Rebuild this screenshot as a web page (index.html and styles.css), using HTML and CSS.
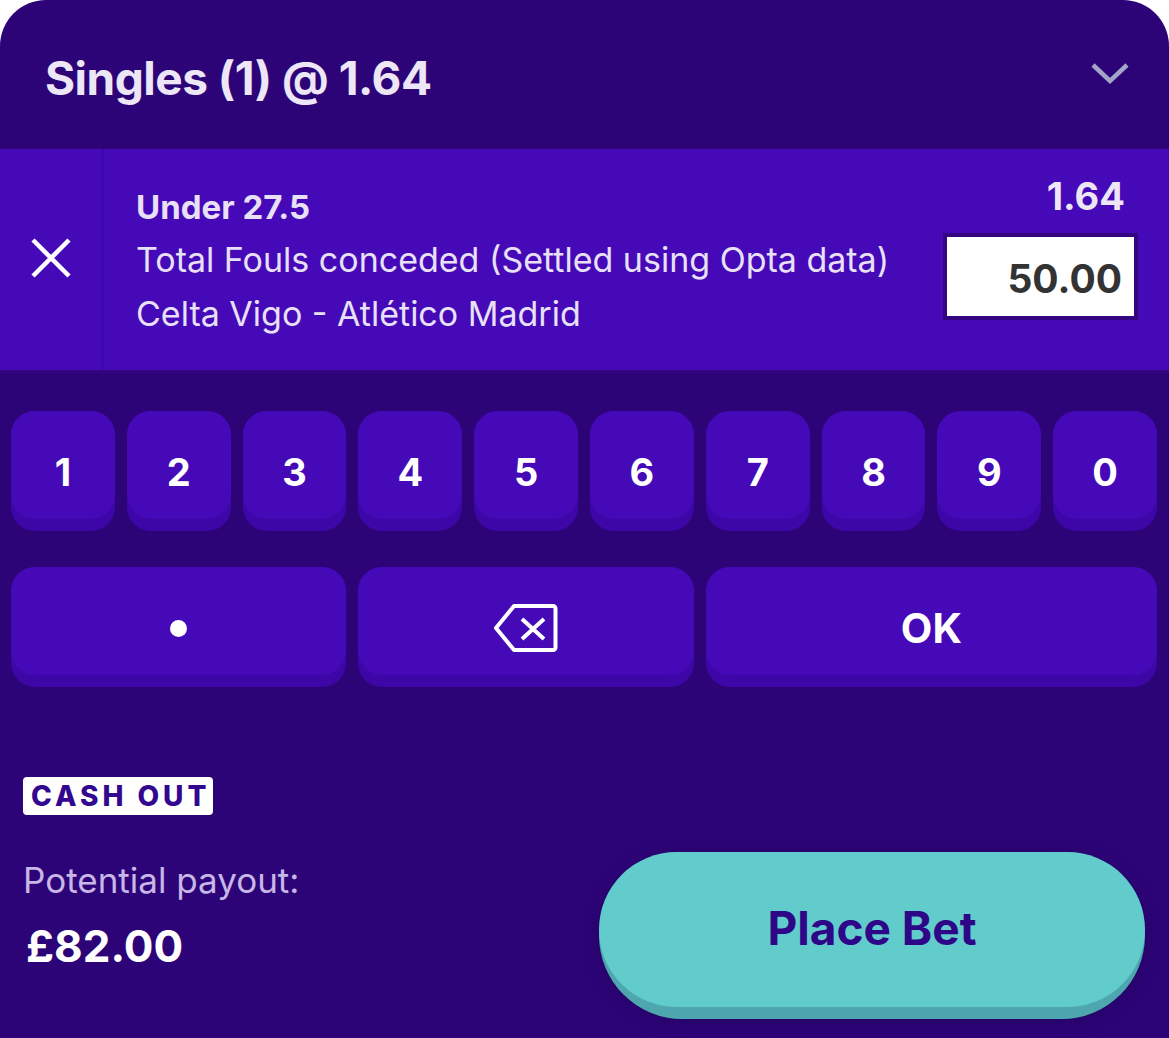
FILE: index.html
```html
<!DOCTYPE html>
<html lang="en">
<head>
  <meta charset="UTF-8">
  <meta name="viewport" content="width=device-width, initial-scale=1.0">
  <title>Bet Slip</title>
  <link rel="stylesheet" href="styles.css">
</head>
<body>
  <div class="betslip">
    <!-- Slip header -->
    <header class="slip-head">
      <h1>Singles (1) @ 1.64</h1>
      <svg class="chevron" width="40" height="24" viewBox="0 0 40 24">
        <path d="M3 4 L20 20 L37 4" fill="none" stroke="#a3a5c6" stroke-width="4.5"/>
      </svg>
    </header>

    <!-- Selection row -->
    <section class="selection">
      <div class="remove">
        <svg width="40" height="40" viewBox="0 0 40 40">
          <path d="M2 2 L38 38 M38 2 L2 38" stroke="#fff" stroke-width="4.5"/>
        </svg>
      </div>
      <div class="sel-info">
        <div class="market">Under 27.5</div>
        <div class="desc">Total Fouls conceded (Settled using Opta data)</div>
        <div class="desc">Celta Vigo - Atlético Madrid</div>
      </div>
      <div class="sel-stake">
        <div class="odds">1.64</div>
        <div class="stake">50.00</div>
      </div>
    </section>

    <!-- Stake keypad -->
    <div class="keypad">
      <div class="key"><span>1</span></div>
      <div class="key"><span>2</span></div>
      <div class="key"><span>3</span></div>
      <div class="key"><span>4</span></div>
      <div class="key"><span>5</span></div>
      <div class="key"><span>6</span></div>
      <div class="key"><span>7</span></div>
      <div class="key"><span>8</span></div>
      <div class="key"><span>9</span></div>
      <div class="key"><span>0</span></div>
      <div class="key wide"><span><i class="dot"></i></span></div>
      <div class="key wide">
        <span>
          <svg width="66" height="50" viewBox="0 0 66 50">
            <path d="M21 3 H60 A2.5 2.5 0 0 1 62.5 5.5 V44.5 A2.5 2.5 0 0 1 60 47 H21 L3 25 Z" fill="none" stroke="#fff" stroke-width="4" stroke-linejoin="round"/>
            <path d="M29 16 L51 36 M51 16 L29 36" stroke="#fff" stroke-width="4"/>
          </svg>
        </span>
      </div>
      <div class="key ok"><span>OK</span></div>
    </div>

    <!-- Payout and place bet -->
    <footer class="slip-foot">
      <div class="payout">
        <div class="badge">CASH OUT</div>
        <div class="payout-label">Potential payout:</div>
        <div class="payout-value">£82.00</div>
      </div>
      <button class="place-bet"><span>Place Bet</span></button>
    </footer>
  </div>
</body>
</html>
```

FILE: styles.css
```css
body {
  margin: 0;
  background-color: #fff;
  font-family: Inter, "Open Sans", sans-serif;
}

.betslip {
  width: 1169px;
  height: 1038px;
  background-color: #2d0478;
  border-radius: 46px 46px 0 0;
  overflow: hidden;
}

.slip-head {
  height: 149px;
  display: flex;
  align-items: center;
  justify-content: space-between;
  padding: 0 39px 0 45px;
  box-sizing: border-box;
}

.slip-head h1 {
  margin: 0;
  color: #ece6f7;
  font-size: 46px;
  font-weight: 700;
  letter-spacing: -0.5px;
  padding-top: 6px;
}

.chevron {
  margin-top: -4px;
}

.selection {
  display: flex;
  height: 221px;
  background-color: #4509b8;
  border-bottom: 3px solid #33067f;
}

.remove {
  width: 104px;
  flex: none;
  display: flex;
  align-items: center;
  justify-content: center;
  border-right: 2px solid #3e08a8;
  padding-bottom: 4px;
  box-sizing: border-box;
}

.sel-info {
  flex: 1;
  padding: 36px 0 0 32px;
  color: #e8e0f6;
}

.market {
  font-size: 33px;
  font-weight: 700;
  line-height: 44px;
  margin-bottom: 4px;
}

.desc {
  font-size: 34px;
  line-height: 54px;
}

.sel-stake {
  display: flex;
  flex-direction: column;
  align-items: flex-end;
  padding: 24px 31px 0 0;
}

.odds {
  color: #ece6f7;
  font-size: 38px;
  font-weight: 700;
  line-height: 46px;
  margin-right: 13px;
}

.stake {
  margin-top: 14px;
  width: 175px;
  height: 79px;
  background-color: #fff;
  border: 4px solid #33067f;
  color: #333;
  font-size: 39px;
  font-weight: 700;
  text-align: right;
  line-height: 84px;
  padding-right: 12px;
  box-sizing: content-box;
}

.keypad {
  display: grid;
  grid-template-columns: repeat(10, 1fr);
  gap: 36px 12px;
  padding: 38px 12px 0 11px;
}

.key {
  background-color: #3c07a6;
  border-radius: 24px;
  padding-bottom: 12px;
}

.key span {
  height: 108px;
  display: flex;
  align-items: center;
  justify-content: center;
  background-color: #4609b8;
  border-radius: 24px;
  color: #fff;
  font-size: 38px;
  font-weight: 700;
  padding-top: 14px;
  box-sizing: border-box;
}

.key.wide {
  grid-column: span 3;
}

.key.ok {
  grid-column: span 4;
}

.key.ok span {
  font-size: 41px;
}

.dot {
  display: block;
  width: 17px;
  height: 17px;
  border-radius: 50%;
  background-color: #fff;
}

.slip-foot {
  display: flex;
  justify-content: space-between;
  align-items: flex-start;
  padding: 90px 24px 0 23px;
}

.badge {
  display: inline-block;
  background-color: #fff;
  color: #33078f;
  border-radius: 4px;
  font-size: 28px;
  font-weight: 800;
  letter-spacing: 4px;
  line-height: 38px;
  padding: 0 3px 0 8px;
}

.payout-label {
  margin-top: 40px;
  color: #c7b6e6;
  font-size: 35px;
  line-height: 50px;
}

.payout-value {
  margin-top: 12px;
  color: #fff;
  font-size: 44px;
  font-weight: 700;
  line-height: 58px;
  padding-left: 3px;
}

.place-bet {
  margin-top: 75px;
  width: 546px;
  height: 167px;
  padding: 0 0 12px;
  border: none;
  border-radius: 84px;
  background-color: #4ea6ae;
  box-shadow: 0 2px 18px rgba(20, 0, 60, 0.35);
  cursor: pointer;
  font-family: inherit;
}

.place-bet span {
  display: flex;
  align-items: center;
  justify-content: center;
  height: 155px;
  padding-bottom: 4px;
  box-sizing: border-box;
  border-radius: 80px;
  background-color: #62cbcb;
  color: #2e0789;
  font-size: 46px;
  font-weight: 700;
}
```
